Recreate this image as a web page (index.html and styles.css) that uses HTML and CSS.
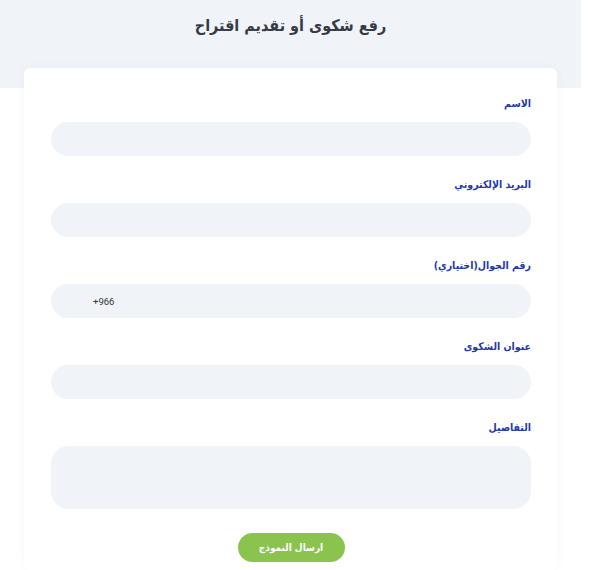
FILE: index.html
```html
<!DOCTYPE html>
<html lang="ar" dir="rtl">
<head>
<meta charset="utf-8">
<link rel="stylesheet" href="styles.css">
</head>
<body>
<div class="page">
  <div class="hero">
    <h1 class="title">رفع شكوى أو تقديم اقتراح</h1>
  </div>
  <form class="card">
    <div class="field">
      <label class="label">الاسم</label>
      <div class="input"></div>
    </div>
    <div class="field">
      <label class="label">البريد الإلكتروني</label>
      <div class="input"></div>
    </div>
    <div class="field">
      <label class="label">رقم الجوال(اختياري)</label>
      <div class="input phone"><span class="code">+966</span></div>
    </div>
    <div class="field">
      <label class="label">عنوان الشكوى</label>
      <div class="input"></div>
    </div>
    <div class="field">
      <label class="label">التفاصيل</label>
      <div class="input area"></div>
    </div>
    <div class="actions">
      <button type="button" class="submit">ارسال النموذج</button>
    </div>
  </form>
</div>
</body>
</html>
```

FILE: styles.css
```css
html, body {
  margin: 0;
  padding: 0;
  background: #ffffff;
}
body {
  font-family: "DejaVu Sans Condensed", "DejaVu Sans", sans-serif;
}
.page {
  width: 581px;
  margin-left: 0;
  margin-right: auto;
}
.hero {
  background: #f0f3f7;
  height: 88px;
  display: flex;
  justify-content: center;
}
.title {
  margin: 13px 0 0;
  font-size: 16px;
  font-weight: bold;
  color: #353b45;
  line-height: 26px;
}
.card {
  margin: -20px 24px 0;
  background: #fff;
  border-radius: 6px;
  box-shadow: 0 0 12px rgba(0, 0, 0, 0.035);
  padding: 26px 26px 8px 27px;
  display: flex;
  flex-direction: column;
  gap: 19px;
}
.field {
  display: flex;
  flex-direction: column;
  gap: 10px;
}
.label {
  font-size: 10.5px;
  font-weight: bold;
  color: #1f39a6;
  line-height: 18px;
}
.input {
  height: 34px;
  border-radius: 17px;
  background: #f0f3f7;
  display: flex;
  align-items: center;
  direction: ltr;
}
.area {
  height: 63px;
  border-radius: 18px;
}
.code {
  padding-left: 42px;
  font-family: Roboto, "Liberation Sans", sans-serif;
  font-size: 9.5px;
  color: #333;
}
.actions {
  display: flex;
  justify-content: center;
  padding-top: 5px;
}
.submit {
  width: 107px;
  height: 29px;
  border: 0;
  border-radius: 15px;
  background: #8bc34f;
  color: #fff;
  font-family: "DejaVu Sans Condensed", "DejaVu Sans", sans-serif;
  font-size: 10px;
  font-weight: bold;
}
```
